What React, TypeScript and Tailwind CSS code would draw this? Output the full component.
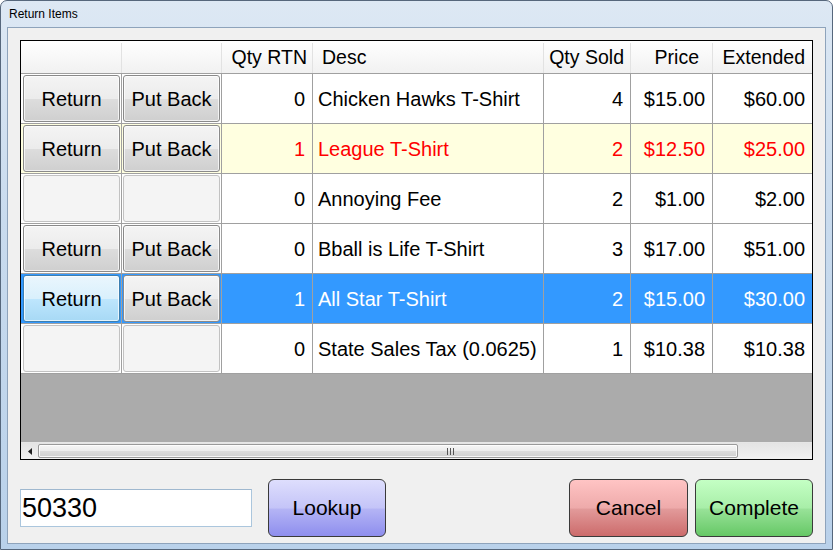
import React from "react";

type Row = {
  rtn: number;
  desc: string;
  sold: number;
  price: string;
  ext: string;
  buttons: boolean;
  state?: "changed" | "selected";
};

const rows: Row[] = [
  { rtn: 0, desc: "Chicken Hawks T-Shirt", sold: 4, price: "$15.00", ext: "$60.00", buttons: true },
  { rtn: 1, desc: "League T-Shirt", sold: 2, price: "$12.50", ext: "$25.00", buttons: true, state: "changed" },
  { rtn: 0, desc: "Annoying Fee", sold: 2, price: "$1.00", ext: "$2.00", buttons: false },
  { rtn: 0, desc: "Bball is Life T-Shirt", sold: 3, price: "$17.00", ext: "$51.00", buttons: true },
  { rtn: 1, desc: "All Star T-Shirt", sold: 2, price: "$15.00", ext: "$30.00", buttons: true, state: "selected" },
  { rtn: 0, desc: "State Sales Tax (0.0625)", sold: 1, price: "$10.38", ext: "$10.38", buttons: false },
];

const cols = "grid grid-cols-[101px_100px_91px_231px_87px_82px_99px]";

function CellButton({ label, variant }: { label?: string; variant: "normal" | "hot" | "empty" }) {
  if (variant === "empty") {
    return <div className="h-full w-full rounded-[3px] border border-[#c2c2c2] bg-[#f4f4f4]" />;
  }
  const skin =
    variant === "hot"
      ? "border-[#3c7fb1] bg-[linear-gradient(to_bottom,#eaf6fd_0%,#d9f0fc_50%,#bee6fd_51%,#a7d9f5_100%)]"
      : "border-[#8a8a8a] bg-[linear-gradient(to_bottom,#f4f4f4_0%,#ececec_50%,#dddddd_51%,#cfcfcf_100%)]";
  return (
    <div
      className={`flex h-full w-full items-center justify-center rounded-[3px] border text-black shadow-[inset_0_0_0_1px_rgba(255,255,255,0.7)] ${skin}`}
    >
      {label}
    </div>
  );
}

function BigButton({ label, skin, className = "" }: { label: string; skin: string; className?: string }) {
  return (
    <button
      className={`flex h-[58px] items-center justify-center rounded-[6px] border border-[#3a3a3a] text-[21px] text-black ${skin} ${className}`}
    >
      {label}
    </button>
  );
}

export default function App() {
  return (
    <div className="h-[550px] w-[833px] overflow-hidden font-['Liberation_Sans',Arial,sans-serif]">
      <div className="flex h-full w-full flex-col rounded-t-[7px] border border-[#56677c] bg-[linear-gradient(to_bottom,#dde8f4,#c9dbee_40%,#b9d1ea)] px-[6px] pb-[5px]">
        {/* Title bar */}
        <div className="flex h-[26px] items-center pl-[2px] text-[12px] text-black">Return Items</div>

        {/* Client area */}
        <div className="flex flex-1 flex-col border border-[#8ea3bb] bg-[#f0f0f0] px-[12px] pt-[12px]">
          {/* Grid */}
          <div className="flex h-[420px] flex-col border border-black bg-[#ababab] text-[20px]">
            <div className={`${cols} h-[33px] border-b border-[#a0a0a0] bg-[linear-gradient(to_bottom,#ffffff,#f1f1f1)] pt-[2px] text-[19.5px] text-black`}>
              <div className="border-r border-[#e2e2e2]" />
              <div className="border-r border-[#e2e2e2]" />
              <div className="flex items-center justify-end border-r border-[#e2e2e2] pr-[5px]">Qty RTN</div>
              <div className="flex items-center border-r border-[#e2e2e2] pl-[9px]">Desc</div>
              <div className="flex items-center justify-end border-r border-[#e2e2e2] pr-[6px]">Qty Sold</div>
              <div className="flex items-center justify-end border-r border-[#e2e2e2] pr-[13px]">Price</div>
              <div className="flex items-center justify-end pr-[7px]">Extended</div>
            </div>

            {rows.map((r, i) => {
              const tone =
                r.state === "selected"
                  ? "bg-[#3399ff] text-white"
                  : r.state === "changed"
                  ? "bg-[#ffffe0] text-[#ff0000]"
                  : "bg-white text-black";
              return (
                <div key={i} className={`${cols} h-[50px] border-b border-[#a0a0a0] ${tone}`}>
                  <div className="border-r border-[#a0a0a0] py-[1px] pl-[2px] pr-[1px]">
                    <CellButton
                      label="Return"
                      variant={!r.buttons ? "empty" : r.state === "selected" ? "hot" : "normal"}
                    />
                  </div>
                  <div className="border-r border-[#a0a0a0] p-[1px]">
                    <CellButton label="Put Back" variant={r.buttons ? "normal" : "empty"} />
                  </div>
                  <div className="flex items-center justify-end border-r border-[#a0a0a0] pr-[7px]">{r.rtn}</div>
                  <div className="flex items-center border-r border-[#a0a0a0] pl-[5px]">{r.desc}</div>
                  <div className="flex items-center justify-end border-r border-[#a0a0a0] pr-[7px]">{r.sold}</div>
                  <div className="flex items-center justify-end border-r border-[#a0a0a0] pr-[7px]">{r.price}</div>
                  <div className="flex items-center justify-end pr-[7px]">{r.ext}</div>
                </div>
              );
            })}

            <div className="flex-1" />

            {/* Horizontal scrollbar */}
            <div className="flex h-[17px] items-stretch border-t border-[#e6e6e6] bg-[linear-gradient(to_bottom,#e4e4e4,#f1f1f1)]">
              <div className="flex w-[17px] items-center justify-center">
                <svg width="4" height="7" viewBox="0 0 4 7">
                  <path d="M4 0 L0 3.5 L4 7 Z" fill="#202020" />
                </svg>
              </div>
              <div className="my-[1px] flex w-[700px] items-center rounded-[2px] border border-[#9a9a9a] bg-[linear-gradient(to_bottom,#f6f6f6,#ececec_50%,#dcdcdc_51%,#d0d0d0)] pl-[408px] shadow-[inset_0_0_0_1px_rgba(255,255,255,0.8)]">
                <div className="flex gap-[2px]">
                  <span className="h-[7px] w-[1px] bg-[#555]" />
                  <span className="h-[7px] w-[1px] bg-[#555]" />
                  <span className="h-[7px] w-[1px] bg-[#555]" />
                </div>
              </div>
            </div>
          </div>

          {/* Bottom controls */}
          <div className="mt-[19px] flex items-center">
            <input
              readOnly
              value="50330"
              className="h-[38px] w-[232px] border border-[#abc6dd] border-t-[#9fb8cf] bg-white px-[1px] text-[27px] text-black outline-none"
            />
            <BigButton
              label="Lookup"
              className="ml-[16px] w-[118px]"
              skin="bg-[linear-gradient(to_bottom,#dedefd,#c4c4f8_50%,#b4b4f5_52%,#8e8eee)]"
            />
            <BigButton
              label="Cancel"
              className="ml-auto w-[119px]"
              skin="bg-[linear-gradient(to_bottom,#ffc4c4,#eeaaaa_50%,#e29a9a_52%,#cc6b6b)]"
            />
            <BigButton
              label="Complete"
              className="ml-[7px] w-[118px]"
              skin="bg-[linear-gradient(to_bottom,#c4ffc4,#a8eea8_50%,#98e298_52%,#66c866)]"
            />
          </div>
        </div>
      </div>
    </div>
  );
}
